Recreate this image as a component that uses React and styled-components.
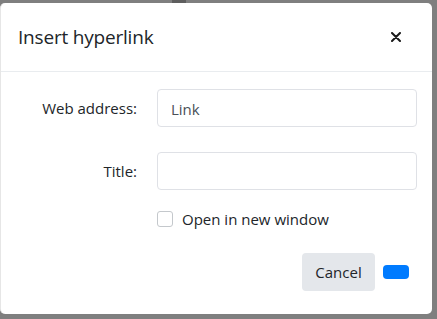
import React from 'react';
import styled, { createGlobalStyle } from 'styled-components';

const GlobalStyle = createGlobalStyle`
  html, body {
    margin: 0;
    padding: 0;
    background: #7f7f7f;
    font-family: "Open Sans", "Noto Sans", sans-serif;
  }
`;

const Backdrop = styled.div`
  width: 437px;
  height: 319px;
  padding-top: 3px;
  box-sizing: border-box;
  background: #7f7f7f;
  position: relative;
`;

const Shade = styled.div`
  position: absolute;
  top: 0;
  left: 172px;
  width: 14px;
  height: 3px;
  background: #5e5e5e;
`;

const Dialog = styled.div`
  width: 432px;
  height: 311px;
  background: #fff;
  border-radius: 5px;
  border-left: 1px solid #e6e6e6;
  box-sizing: border-box;
  display: flex;
  flex-direction: column;
`;

const Header = styled.div`
  display: flex;
  align-items: center;
  justify-content: space-between;
  height: 69px;
  padding: 0 29px 0 17px;
  border-bottom: 1px solid #e9ecef;
  box-sizing: border-box;
`;

const Title = styled.h5`
  margin: 0;
  font-size: 19px;
  font-weight: 400;
  color: #212529;
  letter-spacing: -0.2px;
`;

const Close = styled.button`
  border: 0;
  background: none;
  padding: 0;
  width: 14px;
  height: 14px;
  display: flex;
  align-items: center;
  justify-content: center;
  cursor: pointer;
`;

const Body = styled.div`
  padding: 17px 15px 0 0;
  display: grid;
  grid-template-columns: 136px 1fr;
  column-gap: 20px;
  row-gap: 25px;
  align-items: center;
`;

const Label = styled.label`
  text-align: right;
  font-size: 15px;
  color: #212529;
`;

const Input = styled.input`
  height: 38px;
  box-sizing: border-box;
  border: 1px solid #dfe1e6;
  border-radius: 4px;
  padding: 2px 13px 0;
  font-family: inherit;
  font-size: 15px;
  color: #495057;
  outline: none;
`;

const CheckRow = styled.div`
  grid-column: 2;
  display: flex;
  align-items: center;
  gap: 9px;
  margin-top: -6px;
  font-size: 15px;
  color: #212529;
`;

const Box = styled.span`
  width: 14px;
  height: 14px;
  border: 1px solid #c4c8cc;
  border-radius: 3px;
  background: #fff;
`;

const Footer = styled.div`
  display: flex;
  justify-content: flex-end;
  align-items: center;
  gap: 8px;
  padding: 24px 23px 0 0;
`;

const Button = styled.button`
  border: 0;
  font-family: inherit;
  font-size: 15px;
  color: #212529;
  border-radius: 4px;
  background: ${p => (p.$primary ? '#007bff' : '#e4e7eb')};
  height: ${p => (p.$primary ? '14px' : '38px')};
  width: ${p => (p.$primary ? '26px' : '73px')};
  padding: 0;
`;

export default function App() {
  return (
    <>
      <GlobalStyle />
      <Backdrop>
        <Shade />
        <Dialog>
          <Header>
            <Title>Insert hyperlink</Title>
            <Close aria-label="Close">
              <svg width="10" height="10" viewBox="0 0 10 10">
                <path d="M1 1L9 9M9 1L1 9" stroke="#1a1a1a" strokeWidth="2" strokeLinecap="round" />
              </svg>
            </Close>
          </Header>
          <Body>
            <Label>Web address:</Label>
            <Input defaultValue="Link" />
            <Label>Title:</Label>
            <Input />
            <CheckRow>
              <Box />
              <span>Open in new window</span>
            </CheckRow>
          </Body>
          <Footer>
            <Button>Cancel</Button>
            <Button $primary />
          </Footer>
        </Dialog>
      </Backdrop>
    </>
  );
}
